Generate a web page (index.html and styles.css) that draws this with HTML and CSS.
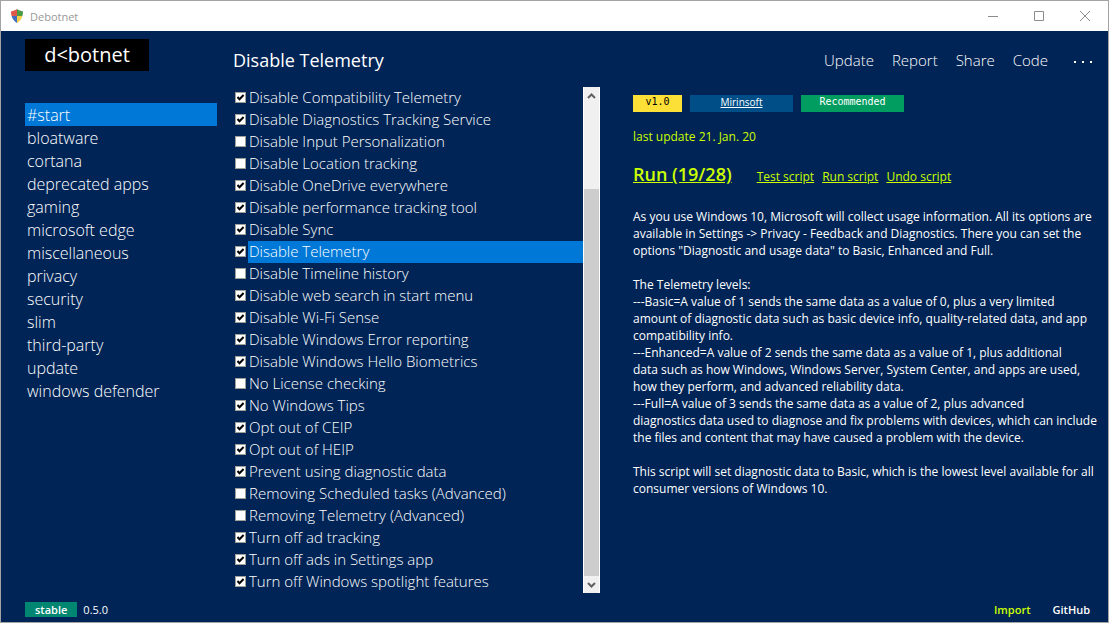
FILE: index.html
```html
<!DOCTYPE html>
<html lang="en">
<head>
<meta charset="utf-8">
<meta name="viewport" content="width=device-width, initial-scale=1">
<title>Debotnet</title>
<link rel="stylesheet" href="styles.css">
</head>
<body>
<div class="window">
  <header class="titlebar">
    <svg class="app-icon" width="12" height="14" viewBox="0 0 12 14" aria-hidden="true">
      <path d="M6 0C4 1.400 2 2 0 2.500c0 2 .2 3 .6 4.500H6z" fill="#e0584a"/>
      <path d="M6 0c2 1.400 4 2 6 2.500 0 2-.2 3-.6 4.500H6z" fill="#4c9a46"/>
      <path d="M.6 7c.7 3 2.900 5.500 5.400 7V7z" fill="#3f6fc0"/>
      <path d="M11.400 7c-.7 3-2.900 5.500-5.400 7V7z" fill="#f6cf4a"/>
    </svg>
    <span class="app-name">Debotnet</span>
    <div class="window-buttons">
      <button type="button" aria-label="Minimize"><svg width="10" height="10" viewBox="0 0 10 10"><path d="M0 5.500h10"/></svg></button>
      <button type="button" aria-label="Maximize"><svg width="10" height="10" viewBox="0 0 10 10"><path d="M.5.5h9v9h-9z"/></svg></button>
      <button type="button" aria-label="Close"><svg width="10" height="10" viewBox="0 0 10 10"><path d="M0 0l10 10M10 0L0 10"/></svg></button>
    </div>
  </header>

  <main class="layout">
    <div class="brand"><span class="logo">d&lt;botnet</span></div>
    <h1 class="title">Disable Telemetry</h1>
    <div class="menu">
      <button type="button">Update</button>
      <button type="button">Report</button>
      <button type="button">Share</button>
      <button type="button">Code</button>
      <button type="button" class="more" aria-label="More"><svg width="20" height="8" viewBox="0 0 20 8"><path d="M1 5h2v2H1zM9 5h2v2H9zM17 5h2v2h-2z"/></svg></button>
    </div>

    <nav class="groups">
      <a class="group current" href="#start">#start</a>
      <a class="group" href="#bloatware">bloatware</a>
      <a class="group" href="#cortana">cortana</a>
      <a class="group" href="#deprecated">deprecated apps</a>
      <a class="group" href="#gaming">gaming</a>
      <a class="group" href="#edge">microsoft edge</a>
      <a class="group" href="#misc">miscellaneous</a>
      <a class="group" href="#privacy">privacy</a>
      <a class="group" href="#security">security</a>
      <a class="group" href="#slim">slim</a>
      <a class="group" href="#third-party">third-party</a>
      <a class="group" href="#update">update</a>
      <a class="group" href="#defender">windows defender</a>
    </nav>

    <section class="list">
      <div class="items">
        <label class="item"><input type="checkbox" checked><span>Disable Compatibility Telemetry</span></label>
        <label class="item"><input type="checkbox" checked><span>Disable Diagnostics Tracking Service</span></label>
        <label class="item"><input type="checkbox"><span>Disable Input Personalization</span></label>
        <label class="item"><input type="checkbox"><span>Disable Location tracking</span></label>
        <label class="item"><input type="checkbox" checked><span>Disable OneDrive everywhere</span></label>
        <label class="item"><input type="checkbox" checked><span>Disable performance tracking tool</span></label>
        <label class="item"><input type="checkbox" checked><span>Disable Sync</span></label>
        <label class="item selected"><input type="checkbox" checked><span>Disable Telemetry</span></label>
        <label class="item"><input type="checkbox"><span>Disable Timeline history</span></label>
        <label class="item"><input type="checkbox" checked><span>Disable web search in start menu</span></label>
        <label class="item"><input type="checkbox" checked><span>Disable Wi-Fi Sense</span></label>
        <label class="item"><input type="checkbox" checked><span>Disable Windows Error reporting</span></label>
        <label class="item"><input type="checkbox" checked><span>Disable Windows Hello Biometrics</span></label>
        <label class="item"><input type="checkbox"><span>No License checking</span></label>
        <label class="item"><input type="checkbox" checked><span>No Windows Tips</span></label>
        <label class="item"><input type="checkbox" checked><span>Opt out of CEIP</span></label>
        <label class="item"><input type="checkbox" checked><span>Opt out of HEIP</span></label>
        <label class="item"><input type="checkbox" checked><span>Prevent using diagnostic data</span></label>
        <label class="item"><input type="checkbox"><span>Removing Scheduled tasks (Advanced)</span></label>
        <label class="item"><input type="checkbox"><span>Removing Telemetry (Advanced)</span></label>
        <label class="item"><input type="checkbox" checked><span>Turn off ad tracking</span></label>
        <label class="item"><input type="checkbox" checked><span>Turn off ads in Settings app</span></label>
        <label class="item"><input type="checkbox" checked><span>Turn off Windows spotlight features</span></label>
      </div>
      <div class="scrollbar">
        <button type="button" aria-label="Scroll up"><svg width="9" height="6" viewBox="0 0 9 6"><path d="M1 5l3.500-3.500L8 5"/></svg></button>
        <div class="track"><div class="thumb"></div></div>
        <button type="button" aria-label="Scroll down"><svg width="9" height="6" viewBox="0 0 9 6"><path d="M1 1l3.500 3.500L8 1"/></svg></button>
      </div>
    </section>

    <section class="detail">
      <div class="badges">
        <span class="badge version">v1.0</span>
        <a class="badge author" href="#author">Mirinsoft</a>
        <span class="badge rating">Recommended</span>
      </div>
      <p class="updated">last update 21. Jan. 20</p>
      <div class="actions">
        <a class="run" href="#run">Run (19/28)</a>
        <a class="action" href="#test">Test script</a>
        <a class="action" href="#run-script">Run script</a>
        <a class="action" href="#undo">Undo script</a>
      </div>
      <div class="description">
        <p>As you use Windows 10, Microsoft will collect usage information. All its options are<br>available in Settings -&gt; Privacy - Feedback and Diagnostics. There you can set the<br>options "Diagnostic and usage data" to Basic, Enhanced and Full.</p>
        <p>The Telemetry levels:<br>---Basic=A value of 1 sends the same data as a value of 0, plus a very limited<br>amount of diagnostic data such as basic device info, quality-related data, and app<br>compatibility info.<br>---Enhanced=A value of 2 sends the same data as a value of 1, plus additional<br>data such as how Windows, Windows Server, System Center, and apps are used,<br>how they perform, and advanced reliability data.<br>---Full=A value of 3 sends the same data as a value of 2, plus advanced<br>diagnostics data used to diagnose and fix problems with devices, which can include<br>the files and content that may have caused a problem with the device.</p>
        <p>This script will set diagnostic data to Basic, which is the lowest level available for all<br>consumer versions of Windows 10.</p>
      </div>
    </section>
  </main>

  <footer class="footer">
    <span class="channel">stable</span>
    <span class="release">0.5.0</span>
    <button type="button" class="import">Import</button>
    <a class="github" href="#github">GitHub</a>
  </footer>
</div>
</body>
</html>
```
FILE: styles.css
```css
* {
  box-sizing: border-box;
}

body {
  margin: 0;
  font-family: "Open Sans", "Noto Sans", sans-serif;
  font-size: 12px;
  color: #fff;
}

button {
  padding: 0;
  border: 0;
  background: none;
  color: inherit;
  font: inherit;
}

a {
  color: inherit;
  text-decoration: none;
}

h1,
p {
  margin: 0;
}

.window {
  display: flex;
  flex-direction: column;
  min-height: 100vh;
  border: 1px solid #a3a3a3;
  background: #002456;
}

.titlebar {
  display: flex;
  align-items: center;
  height: 30px;
  padding-left: 10px;
  background: #fff;
  color: #999;
  font-size: 11px;
}

.app-name {
  margin-left: 7px;
}

.window-buttons {
  display: flex;
  margin-left: auto;
}

.window-buttons button {
  display: grid;
  place-items: center;
  width: 46px;
  height: 30px;
}

.window-buttons svg {
  fill: none;
  stroke: #8c8c8c;
}

.layout {
  display: grid;
  grid-template-columns: 192px minmax(0, 383fr) minmax(0, 508fr);
  grid-template-rows: 56px auto;
  flex: 1;
  padding-left: 24px;
}

.brand {
  padding-top: 8px;
}

.logo {
  display: block;
  width: 124px;
  background: #000;
  font-size: 20px;
  line-height: 32px;
  text-align: center;
}

.title {
  padding-left: 16px;
  font-size: 18px;
  font-weight: 400;
  line-height: 58px;
}

.menu {
  display: flex;
  align-items: center;
  justify-content: flex-end;
  gap: 18px;
  padding: 2px 15px 0 0;
  font-size: 15px;
  font-weight: 300;
}

.more {
  display: flex;
  margin-left: 7px;
}

.more svg {
  fill: #fff;
}

.groups {
  padding-top: 16px;
}

.group {
  display: block;
  padding: 1px 0 0 2px;
  font-size: 16px;
  font-weight: 300;
  line-height: 22px;
}

.group.current,
.selected span {
  background: #0078d7;
}

.list {
  display: flex;
  align-self: start;
  padding-left: 18px;
}

.items {
  flex: 1;
}

.item {
  display: flex;
  align-items: center;
  gap: 2px;
  height: 22px;
  font-size: 15px;
  font-weight: 300;
  line-height: 20px;
  white-space: nowrap;
}

.item span {
  flex: 1;
  padding: 0 0 2px 1px;
}

.item input {
  appearance: none;
  width: 11px;
  height: 11px;
  margin: 0 0 1px;
  border: 1px solid #a09f98;
  background: #fff;
}

.item input:checked {
  background: #fff url("data:image/svg+xml,%3Csvg xmlns='http://www.w3.org/2000/svg' viewBox='0 0 9 9'%3E%3Cpath d='M1.500 4l2 2.200L7.600 2' fill='none' stroke='%23000' stroke-width='2'/%3E%3C/svg%3E");
}

.scrollbar {
  display: flex;
  flex-direction: column;
  width: 17px;
  border: solid #fff;
  border-width: 0 1px;
  background: #f0f0f0;
}

.scrollbar button {
  display: grid;
  place-items: center;
  height: 17px;
}

.scrollbar svg {
  fill: none;
  stroke: #606060;
  stroke-width: 2;
}

.track {
  display: flex;
  flex: 1;
  align-items: flex-end;
}

.thumb {
  width: 100%;
  height: 82%;
  background: #cdcdcd;
}

.detail {
  padding: 8px 0 0 33px;
}

.badges {
  display: flex;
  gap: 8px;
  font-size: 10px;
  line-height: 14px;
  text-align: center;
}

.badge {
  height: 17px;
}

.version {
  width: 49px;
  background: #fce037;
  color: #000;
  font-family: "DejaVu Sans Mono", monospace;
}

.author {
  width: 103px;
  background: #004e87;
  text-decoration: underline;
}

.rating {
  width: 103px;
  background: #009c60;
  font-family: "DejaVu Sans Mono", monospace;
}

.updated {
  margin-top: 16px;
  color: #cf0;
  line-height: 17px;
}

.actions {
  display: flex;
  align-items: baseline;
  gap: 8px;
  margin-top: 16px;
  color: #cf0;
  line-height: 26px;
}

.actions a {
  text-decoration: underline;
}

.run {
  margin-right: 17px;
  font-size: 18px;
  font-weight: 600;
}

.description {
  margin-top: 18px;
  line-height: 17px;
  white-space: nowrap;
}

.description p + p {
  margin-top: 17px;
}

.footer {
  display: flex;
  align-items: center;
  height: 26px;
  padding: 0 18px 0 24px;
  font-size: 11px;
}

.channel {
  padding: 0 10px;
  background: #008671;
  font-weight: 600;
  line-height: 15px;
}

.release {
  margin-left: 6px;
}

.import {
  margin-left: auto;
  color: #cf0;
  font-weight: 600;
}

.github {
  margin-left: 22px;
  font-weight: 600;
}
```
